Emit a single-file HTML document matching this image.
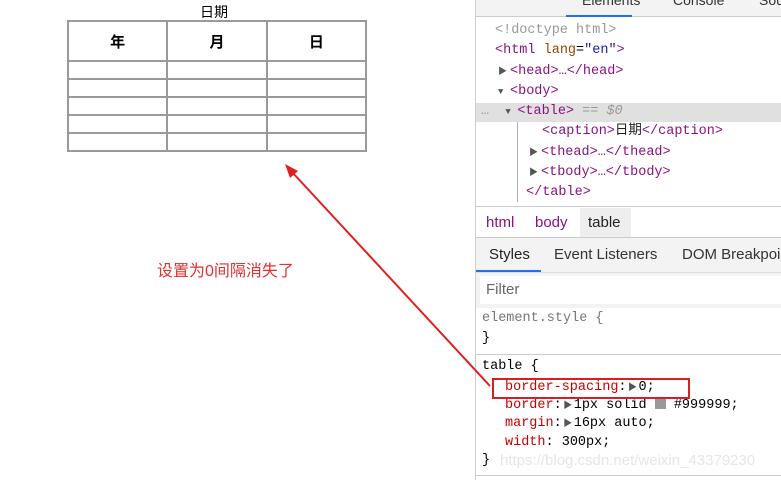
<!DOCTYPE html>
<html><head><meta charset="utf-8"><style>
*{margin:0;padding:0;box-sizing:border-box}
body{width:781px;height:480px;background:#fff;position:relative;overflow:hidden;font-family:"Liberation Sans","Noto Sans CJK SC",sans-serif}
.a{position:absolute;white-space:nowrap}
table{position:absolute;left:67px;top:20px;width:300px;border-collapse:separate;border-spacing:0;border:1px solid #999}
td,th{border:1px solid #999;font-size:15px}
th{height:40px;font-weight:bold}
td{height:18px}
.m{font-family:"Liberation Mono","Noto Sans CJK SC",monospace;font-size:13.5px;line-height:18px;height:18px}
.t{color:#881280}.at{color:#994500}.v{color:#1a1aa6}.g{color:#999}
.p{color:#c80000}
.tri{display:inline-block;width:12px;font-size:9px;line-height:18px;color:#555;vertical-align:top}
</style></head><body>
<div class="a" style="left:200px;top:2px;font-size:14px">日期</div>
<table>
<tr><th>年</th><th>月</th><th>日</th></tr>
<tr><td></td><td></td><td></td></tr>
<tr><td></td><td></td><td></td></tr>
<tr><td></td><td></td><td></td></tr>
<tr><td></td><td></td><td></td></tr>
<tr><td></td><td></td><td></td></tr>
</table>
<div class="a" style="left:157px;top:257px;font-size:16px;color:#e03030">设置为0间隔消失了</div>
<!-- devtools -->
<div class="a" style="left:475px;top:0;width:306px;height:480px;background:#fff;border-left:1px solid #ccc"></div>
<div class="a" style="left:476px;top:0;width:305px;height:17px;background:#f3f3f3;border-bottom:1px solid #ccc"></div>
<div class="a" style="left:566px;top:15px;width:66px;height:2px;background:#1a73e8"></div>
<div class="a" style="left:582px;top:-8px;font-size:14px;color:#333">Elements</div>
<div class="a" style="left:673px;top:-8px;font-size:14px;color:#333">Console</div>
<div class="a" style="left:759px;top:-8px;font-size:14px;color:#333">Sou</div>
<div class="a" style="left:476px;top:103px;width:305px;height:19px;background:#e0e0e0"></div>
<div class="a" style="left:517px;top:122px;width:1px;height:80px;background:#aac"></div>
<div class="a m g" style="left:495px;top:22px">&lt;!doctype html&gt;</div>
<div class="a m" style="left:495px;top:42px"><span class="t">&lt;html</span> <span class="at">lang</span>=<span class="v">"en"</span><span class="t">&gt;</span></div>
<div class="a m t" style="left:498px;top:63px"><span class="tri">▶</span>&lt;head&gt;…&lt;/head&gt;</div>
<div class="a m t" style="left:498px;top:83px"><span class="tri">▼</span>&lt;body&gt;</div>
<div class="a m" style="left:481px;top:103px"><span class="g">…</span>&nbsp; <span class="tri">▼</span><span class="t">&lt;table&gt;</span> <span class="g"><i>== $0</i></span></div>
<div class="a m t" style="left:542px;top:123px">&lt;caption&gt;<span style="color:#222">日期</span>&lt;/caption&gt;</div>
<div class="a m t" style="left:529px;top:144px"><span class="tri">▶</span>&lt;thead&gt;…&lt;/thead&gt;</div>
<div class="a m t" style="left:529px;top:164px"><span class="tri">▶</span>&lt;tbody&gt;…&lt;/tbody&gt;</div>
<div class="a m t" style="left:526px;top:184px">&lt;/table&gt;</div>
<div class="a" style="left:476px;top:206px;width:305px;height:1px;background:#ccc"></div>
<div class="a" style="left:580px;top:208px;width:51px;height:29px;background:#eee"></div>
<div class="a" style="left:486px;top:214px;font-size:15px;color:#881280">html</div>
<div class="a" style="left:535px;top:214px;font-size:15px;color:#881280">body</div>
<div class="a" style="left:588px;top:214px;font-size:15px;color:#222">table</div>
<div class="a" style="left:476px;top:237px;width:305px;height:36px;background:#f3f3f3;border-top:1px solid #ccc;border-bottom:1px solid #ddd"></div>
<div class="a" style="left:476px;top:270px;width:65px;height:2px;background:#1a73e8"></div>
<div class="a" style="left:489px;top:246px;font-size:15px;color:#222">Styles</div>
<div class="a" style="left:554px;top:246px;font-size:15px;color:#333">Event Listeners</div>
<div class="a" style="left:682px;top:246px;font-size:15px;color:#333">DOM Breakpoints</div>
<div class="a" style="left:476px;top:273px;width:305px;height:35px;background:#f3f3f3"></div>
<div class="a" style="left:480px;top:276px;width:301px;height:28px;background:#fff"></div>
<div class="a" style="left:486px;top:281px;font-size:15px;color:#666">Filter</div>
<div class="a m" style="left:482px;top:310px;color:#777">element.style {</div>
<div class="a m" style="left:482px;top:330px">}</div>
<div class="a" style="left:476px;top:354px;width:305px;height:1px;background:#ccc"></div>
<div class="a m" style="left:482px;top:358px">table {</div>
<div class="a m" style="left:505px;top:379px"><span class="p">border-spacing</span>:<span class="tri" style="text-align:center">▶</span>0;</div>
<div class="a m" style="left:505px;top:397px"><span class="p">border</span>:<span class="tri" style="text-align:center">▶</span>1px solid <span style="display:inline-block;width:11px;height:11px;background:#999;vertical-align:-1px"></span> #999999;</div>
<div class="a m" style="left:505px;top:415px"><span class="p">margin</span>:<span class="tri" style="text-align:center">▶</span>16px auto;</div>
<div class="a m" style="left:505px;top:434px"><span class="p">width</span>: 300px;</div>
<div class="a m" style="left:482px;top:452px">}</div>
<div class="a" style="left:500px;top:452px;font-size:15px;color:#e6e6e6">https://blog.csdn.net/weixin_43379230</div>
<div class="a" style="left:476px;top:475px;width:305px;height:1px;background:#ccc"></div>
<div class="a" style="left:492px;top:378px;width:198px;height:21px;border:2px solid #d42020"></div>
<svg class="a" style="left:0;top:0" width="781" height="480">
<line x1="490" y1="386" x2="292" y2="172" stroke="#e02020" stroke-width="2"/>
<polygon points="285,164 298,171 290,178" fill="#e02020"/>
</svg>
</body></html>
